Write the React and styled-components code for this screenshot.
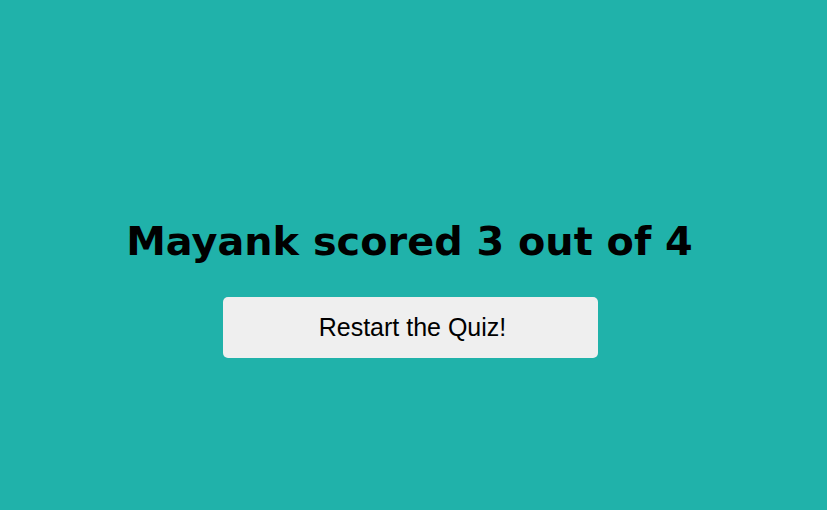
import React from 'react'
import styled, { createGlobalStyle } from 'styled-components'

const Global = createGlobalStyle`
  html, body {
    margin: 0;
    padding: 0;
    background: #20b2aa;
  }
`

const Screen = styled.div`
  height: 510px;
  box-sizing: border-box;
  padding: 215px 0 0 0;
  display: flex;
  flex-direction: column;
  align-items: center;
  background: #20b2aa;
`

const Title = styled.h1`
  margin: 0;
  font-family: 'DejaVu Sans', Verdana, sans-serif;
  font-weight: bold;
  font-size: 39.8px;
  line-height: 52px;
  color: #000;
  transform: translateX(-4px);
`

const RestartButton = styled.button`
  margin-top: 30px;
  width: 375px;
  height: 61px;
  padding: 0 0 0 4px;
  border: none;
  border-radius: 5px;
  background: #efefef;
  font-family: 'Liberation Sans', Arial, sans-serif;
  font-size: 25px;
  color: #000;
  cursor: pointer;
  transform: translateX(-3px);
`

export default () => {
  return (
    <Screen>
      <Global />
      <Title>Mayank scored 3 out of 4</Title>
      <RestartButton>Restart the Quiz!</RestartButton>
    </Screen>
  )
}
